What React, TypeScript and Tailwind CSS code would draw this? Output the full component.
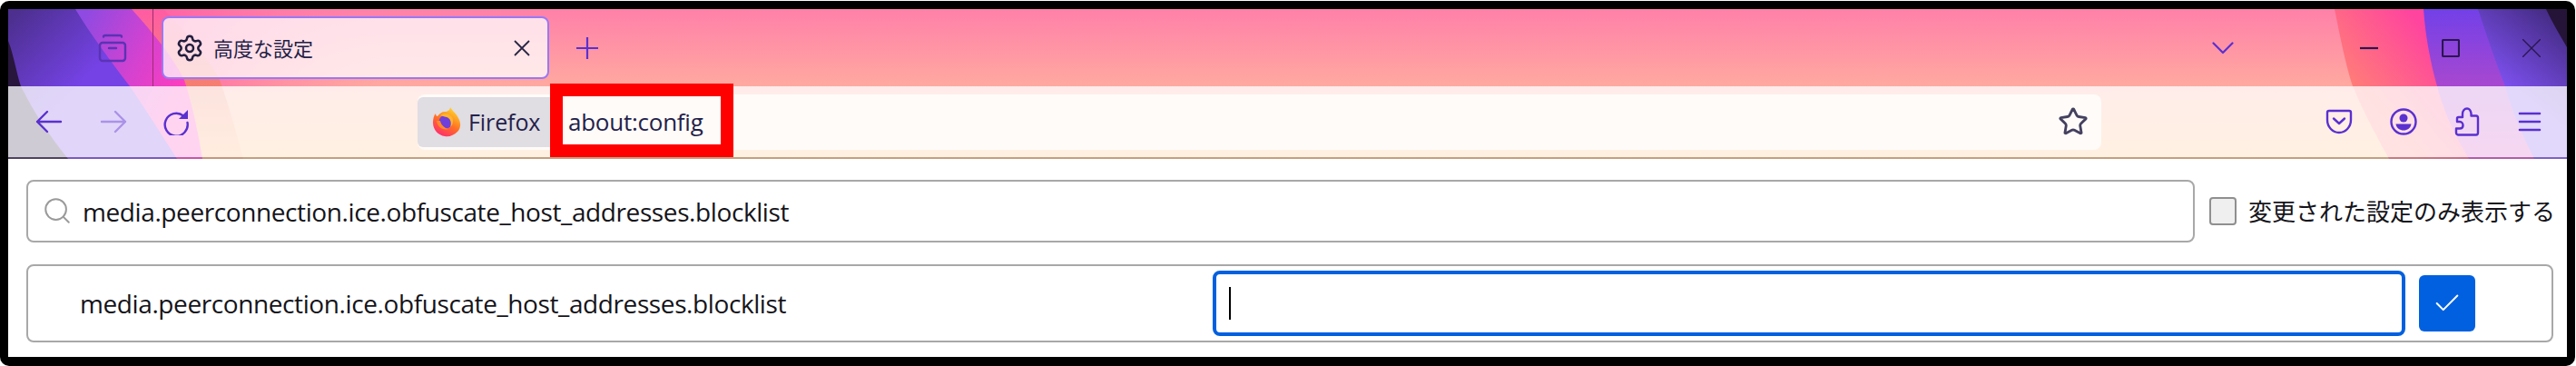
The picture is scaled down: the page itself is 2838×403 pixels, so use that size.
import React from 'react';
import { Settings, Star, Search, Check } from 'lucide-react';

const PREF_NAME = 'media.peerconnection.ice.obfuscate_host_addresses.blocklist';

const ThemeBackground: React.FC = () => (
  <svg className="absolute inset-0 h-full w-full" viewBox="9 10 2819 165" preserveAspectRatio="none">
    <defs>
      <linearGradient id="base" x1="0" y1="10" x2="0" y2="175" gradientUnits="userSpaceOnUse">
        <stop offset="0" stopColor="#ff80a9" />
        <stop offset="0.515" stopColor="#ffa9a0" />
        <stop offset="1" stopColor="#ffbe78" />
      </linearGradient>
      <linearGradient id="hotLeft" x1="150" y1="10" x2="420" y2="10" gradientUnits="userSpaceOnUse">
        <stop offset="0" stopColor="#ff5ca4" />
        <stop offset="1" stopColor="#ff80a9" stopOpacity="0" />
      </linearGradient>
      <linearGradient id="orangeLeft" x1="0" y1="10" x2="0" y2="175" gradientUnits="userSpaceOnUse">
        <stop offset="0" stopColor="#ff5ca4" />
        <stop offset="0.515" stopColor="#f58070" />
        <stop offset="1" stopColor="#ffb070" />
      </linearGradient>
      <linearGradient id="magentaLeft" x1="85" y1="30" x2="205" y2="95" gradientUnits="userSpaceOnUse">
        <stop offset="0" stopColor="#8e4ae2" />
        <stop offset="0.55" stopColor="#d442d0" />
        <stop offset="1" stopColor="#ff3dbd" />
      </linearGradient>
      <linearGradient id="violetLeft" x1="20" y1="10" x2="95" y2="85" gradientUnits="userSpaceOnUse">
        <stop offset="0" stopColor="#4c2f8e" />
        <stop offset="1" stopColor="#7542e5" />
      </linearGradient>
      <linearGradient id="pinkRight" x1="2592" y1="95" x2="2670" y2="30" gradientUnits="userSpaceOnUse">
        <stop offset="0" stopColor="#ff7c78" />
        <stop offset="1" stopColor="#ff449f" />
      </linearGradient>
      <linearGradient id="violetRight" x1="0" y1="10" x2="0" y2="175" gradientUnits="userSpaceOnUse">
        <stop offset="0" stopColor="#7240e8" />
        <stop offset="0.515" stopColor="#a848d0" />
        <stop offset="1" stopColor="#d848c0" />
      </linearGradient>
      <linearGradient id="darkRight" x1="2760" y1="95" x2="2825" y2="15" gradientUnits="userSpaceOnUse">
        <stop offset="0" stopColor="#7c50ee" />
        <stop offset="1" stopColor="#40287a" />
      </linearGradient>
    </defs>
    <rect x="9" y="10" width="2819" height="165" fill="url(#base)" />
    <rect x="9" y="10" width="420" height="85" fill="url(#hotLeft)" />
    <path d="M2572 10C2578 40 2585 75 2592 95C2605 125 2618 150 2632 175H2828V10Z" fill="url(#pinkRight)" />
    <path d="M2670 10C2672 40 2678 70 2685 95C2693 125 2705 150 2720 175H2828V10Z" fill="url(#violetRight)" />
    <path d="M2730 10C2740 40 2750 70 2760 95C2768 125 2780 150 2792 175H2828V10Z" fill="url(#darkRight)" />
    <path d="M2805 10C2812 25 2820 38 2828 52V10Z" fill="#261438" />
    <path d="M9 10H180C210 40 230 65 242 88C252 115 260 145 268 175H9Z" fill="url(#orangeLeft)" />
    <path d="M9 10H145C170 38 190 62 203 88C212 115 218 145 223 175H9Z" fill="url(#magentaLeft)" />
    <path d="M9 10H83C100 38 120 65 143 95C160 120 178 148 195 175H9Z" fill="url(#violetLeft)" />
    <path d="M9 45C15 60 18 80 23 95C38 125 55 150 75 175H9Z" fill="#28163c" />
    <rect x="9" y="95" width="2819" height="78" fill="#ffffff" fillOpacity="0.78" />
    <rect x="9" y="173" width="2819" height="2" fill="#7f7a8c" fillOpacity="0.45" />
  </svg>
);

const FirefoxLogo: React.FC = () => (
  <svg width="32" height="33" viewBox="0 0 32 33" className="shrink-0">
    <defs>
      <linearGradient id="ffBody" x1="24" y1="4" x2="8" y2="31" gradientUnits="userSpaceOnUse">
        <stop offset="0" stopColor="#ffc928" />
        <stop offset="0.5" stopColor="#ff6f24" />
        <stop offset="1" stopColor="#ff2d6f" />
      </linearGradient>
    </defs>
    <path d="M20 0C22 4 27 7 29 12C32 17 32 23 28 27C24 31 19 33 14 32C7 31 1 25 1 17C1 13 2 9 4 7C4 9 5 10 6 10C8 7 11 5 14 5C17 5 20 3 20 0Z" fill="url(#ffBody)" />
    <circle cx="15" cy="16" r="7.5" fill="#6f3fdc" />
    <path d="M9 9C13 6 19 7 22 11C24 15 23 20 20 22C22 17 20 12 16 11C13 10 11 10 9 9Z" fill="#ffb52e" />
    <path d="M5 15C6 22 12 26 18 24C14 23 10 20 9 15Z" fill="#ff8a26" />
  </svg>
);

const AllTabsIcon: React.FC = () => (
  <svg width="32" height="32" viewBox="0 0 32 32" fill="none" stroke="#5a33b4" strokeWidth="2.4" strokeLinecap="round" className="shrink-0">
    <rect x="2" y="10" width="28" height="20" rx="3" />
    <path d="M6 3.5C6 2.5 7 2 8 2H24C25 2 26 2.500 26 3.500" />
    <path d="M12 16H20" />
  </svg>
);

const ArrowIcon: React.FC<{ flip?: boolean; faded?: boolean }> = ({ flip, faded }) => (
  <svg
    width="30"
    height="26"
    viewBox="0 0 30 26"
    fill="none"
    stroke="#5a30d0"
    strokeWidth="2.4"
    strokeLinecap="round"
    strokeLinejoin="round"
    className={`${flip ? '-scale-x-100' : ''} ${faded ? 'opacity-40' : ''}`}
  >
    <path d="M2 13H28M13 2L2 13L13 24" />
  </svg>
);

const ReloadIcon: React.FC = () => (
  <svg width="30" height="30" viewBox="0 0 30 30" fill="none" className="shrink-0">
    <path d="M23 8.500A12.500 12.500 0 1 0 27.500 16" stroke="#5a30d0" strokeWidth="2.400" strokeLinecap="round" />
    <path d="M28 2V12H18Z" fill="#5a30d0" />
  </svg>
);

const PocketIcon: React.FC = () => (
  <svg width="30" height="28" viewBox="0 0 30 28" fill="none" stroke="#5a30d0" strokeWidth="2.400" strokeLinecap="round" strokeLinejoin="round">
    <path d="M2 4C2 2.800 2.800 2 4 2H26C27.200 2 28 2.800 28 4V12C28 20 22 26 15 26C8 26 2 20 2 12Z" />
    <path d="M9 10.500L15 16L21 10.500" />
  </svg>
);

const AccountIcon: React.FC = () => (
  <svg width="30" height="30" viewBox="0 0 30 30" fill="none">
    <circle cx="15" cy="15" r="13.500" stroke="#5a30d0" strokeWidth="2.400" />
    <circle cx="15" cy="11" r="4.500" fill="#5a30d0" />
    <path d="M6.500 17.500H23.500C23 22 19 24.500 15 24.500C11 24.500 7 22 6.500 17.500Z" fill="#5a30d0" />
  </svg>
);

const ExtensionsIcon: React.FC = () => (
  <svg width="28" height="32" viewBox="0 0 28 32" fill="none" stroke="#5a30d0" strokeWidth="2.400" strokeLinejoin="round">
    <path d="M3 16V12.500C3 11.500 3.700 11 4.500 11H9V7.500C9 4 11 1.500 14 1.500C16.500 1.500 18 4 18.500 7V9.500H24C25.500 9.500 26 10.500 26 12V28C26 29.500 25 30.500 24 30.500H4C3 30.500 2 29.500 2 28V23.500H6C8 23.500 9.500 22 9.500 20C9.500 18 8 16 6 16Z" />
  </svg>
);

const MenuIcon: React.FC = () => (
  <svg width="30" height="24" viewBox="0 0 30 24" fill="none" stroke="#5a30d0" strokeWidth="2.600" strokeLinecap="round">
    <path d="M4 3H26M4 12H26M4 21H26" />
  </svg>
);

const WindowControls: React.FC = () => (
  <div className="ml-auto flex items-center pr-[29px]">
    <svg width="24" height="14" viewBox="0 0 24 14" fill="none" stroke="#5a30d0" strokeWidth="2.200" strokeLinecap="round" strokeLinejoin="round">
      <path d="M1.500 1.500L12 12L22.500 1.500" />
    </svg>
    <svg width="20" height="20" viewBox="0 0 20 20" fill="none" stroke="#2a1650" strokeWidth="2.200" className="ml-[139px]">
      <path d="M0 10H20" />
    </svg>
    <svg width="20" height="20" viewBox="0 0 20 20" fill="none" stroke="#2a1650" strokeWidth="2.200" className="ml-[70px]">
      <rect x="1" y="1" width="18" height="18" rx="1" />
    </svg>
    <svg width="20" height="20" viewBox="0 0 20 20" fill="none" stroke="#2a1650" strokeWidth="1.400" className="ml-[69px]">
      <path d="M0 0L20 20M20 0L0 20" />
    </svg>
  </div>
);

const TabStrip: React.FC = () => (
  <div className="relative flex h-[85px] items-center">
    <div className="ml-[100px] flex w-[30px] justify-center">
      <AllTabsIcon />
    </div>
    <div className="ml-[29px] h-full w-px bg-[#a02a70]" />
    <div className="ml-[9px] flex h-[69px] w-[427px] items-center rounded-[8px] border-2 border-[#9a78f4] bg-white/75 pl-[13px] pr-[19px]">
      <Settings size={32} strokeWidth={1.9} className="shrink-0 text-[#221e3e]" />
      <span className="ml-[10px] text-[22px] leading-none text-[#232045]">高度な設定</span>
      <svg width="18" height="18" viewBox="0 0 18 18" fill="none" stroke="#2a2745" strokeWidth="1.800" className="ml-auto">
        <path d="M1 1L17 17M17 1L1 17" />
      </svg>
    </div>
    <svg width="24" height="24" viewBox="0 0 24 24" fill="none" stroke="#5a30d0" strokeWidth="2.200" className="ml-[30px]">
      <path d="M12 0V24M0 12H24" />
    </svg>
    <WindowControls />
  </div>
);

const NavBar: React.FC = () => (
  <div className="relative flex h-[78px] items-center">
    <div className="ml-[30px] flex w-[30px] justify-center">
      <ArrowIcon />
    </div>
    <div className="ml-[41px] flex w-[30px] justify-center">
      <ArrowIcon flip faded />
    </div>
    <div className="ml-[39px] flex w-[30px] justify-center">
      <ReloadIcon />
    </div>
    <div className="ml-[251px] flex h-[61px] w-[1855px] items-center rounded-[8px] bg-[#fffbf8]">
      <div className="flex h-[55px] w-[146px] items-center rounded-l-[6px] bg-[#e0dde3] pl-[16px]">
        <FirefoxLogo />
        <span className="ml-[8px] text-[25px] leading-none tracking-[-0.1px] text-[#23214a]">Firefox</span>
      </div>
      <span className="ml-[20px] text-[26px] leading-none tracking-[-0.25px] text-[#23214a]">about:config</span>
      <Star size={34} strokeWidth={2} className="ml-auto mr-[14px] text-[#45405f]" />
    </div>
    <div className="ml-[247px] flex w-[30px] justify-center">
      <PocketIcon />
    </div>
    <div className="ml-[41px] flex w-[30px] justify-center">
      <AccountIcon />
    </div>
    <div className="ml-[40px] flex w-[30px] justify-center">
      <ExtensionsIcon />
    </div>
    <div className="ml-[39px] flex w-[30px] justify-center">
      <MenuIcon />
    </div>
    {/* annotation drawn over the address bar */}
    <div className="absolute left-[597px] top-[-3px] h-[81px] w-[202px] border-[14px] border-[#ff0000]" />
  </div>
);

const SearchRow: React.FC = () => (
  <div className="flex items-center">
    <div className="flex h-[69px] w-[2389px] items-center rounded-[8px] border-2 border-[#a8a8a8] bg-white pl-[15px]">
      <Search size={34} strokeWidth={1.4} className="shrink-0 -translate-y-px text-[#9a9a9a]" />
      <span className="ml-[11px] text-[28px] leading-none tracking-[-0.4px] text-[#15141a]">{PREF_NAME}</span>
    </div>
    <div className="ml-[16px] h-[31px] w-[30px] shrink-0 rounded-[4px] border-2 border-[#8f8f8f] bg-[#efefef]" />
    <span className="ml-[13px] whitespace-nowrap text-[26px] leading-none text-[#15141a]">変更された設定のみ表示する</span>
  </div>
);

const PrefRow: React.FC = () => (
  <div className="mt-[24px] flex h-[86px] w-[2784px] items-center rounded-[8px] border-2 border-[#a8a8a8] bg-white pl-[57px] pr-[84px]">
    <span className="flex-1 text-[28px] leading-none tracking-[-0.4px] text-[#15141a]">{PREF_NAME}</span>
    <div className="flex h-[72px] w-[1314px] items-center rounded-[8px] border-4 border-[#0060df] bg-white pl-[14px]">
      <div className="h-[36px] w-[2px] bg-black" />
    </div>
    <div className="ml-[15px] flex h-[62px] w-[62px] items-center justify-center rounded-[6px] bg-[#0060df]">
      <Check size={34} strokeWidth={1.4} className="text-white" />
    </div>
  </div>
);

export default function App() {
  return (
    <div className="h-[403px] w-[2838px] overflow-hidden bg-white font-['Open_Sans','Noto_Sans_CJK_JP',sans-serif]">
      <div className="mt-px h-[402px] w-[2837px] rounded-[10px] bg-black pl-[9px] pt-[9px]">
        <div className="relative h-[165px] w-[2819px]">
          <ThemeBackground />
          <TabStrip />
          <NavBar />
        </div>
        <div className="h-[218px] w-[2819px] bg-white pl-[20px] pt-[23px]">
          <SearchRow />
          <PrefRow />
        </div>
      </div>
    </div>
  );
}
